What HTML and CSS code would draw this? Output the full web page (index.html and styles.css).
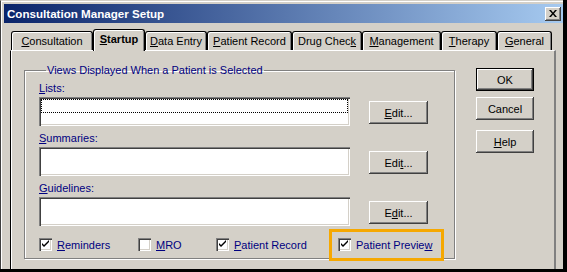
FILE: index.html
```html
<!DOCTYPE html>
<html lang="en">

<head>
    <meta charset="UTF-8">
    <title>Consultation Manager Setup</title>
    <link rel="stylesheet" href="styles.css">
</head>

<body>

    <div class="window">

        <!-- Title bar -->
        <div class="titlebar">
            <span class="title">Consultation Manager Setup</span>
            <span class="close-btn">
                <svg width="8" height="7" viewBox="0 0 8 7">
                    <path d="M0 0h2l2 2.5L6 0h2L5 3.5 8 7H6L4 4.5 2 7H0l3-3.5z" fill="#000" />
                </svg>
            </span>
        </div>

        <!-- Tabs -->
        <div class="tabs">
            <div class="tab tab-consult"><u>C</u>onsultation</div>
            <div class="tab tab-active"><u>S</u>tartup</div>
            <div class="tab tab-data"><u>D</u>ata Entry</div>
            <div class="tab tab-record"><u>P</u>atient Record</div>
            <div class="tab tab-drug">Drug Chec<u>k</u></div>
            <div class="tab tab-manage"><u>M</u>anagement</div>
            <div class="tab tab-therapy"><u>T</u>herapy</div>
            <div class="tab tab-general"><u>G</u>eneral</div>
        </div>

        <!-- Tab panel -->
        <div class="panel">

            <fieldset class="group">
                <legend>Views Displayed When a Patient is Selected</legend>

                <div class="field-label"><u>L</u>ists:</div>
                <div class="field-row">
                    <div class="listbox">
                        <div class="focus-row"></div>
                    </div>
                    <button class="btn btn-edit"><u>E</u>dit...</button>
                </div>

                <div class="field-label"><u>S</u>ummaries:</div>
                <div class="field-row">
                    <div class="listbox"></div>
                    <button class="btn btn-edit">Edi<u>t</u>...</button>
                </div>

                <div class="field-label"><u>G</u>uidelines:</div>
                <div class="field-row">
                    <div class="listbox"></div>
                    <button class="btn btn-edit">E<u>d</u>it...</button>
                </div>

                <div class="checks">
                    <label class="check"><span class="box checked"></span><span><u>R</u>eminders</span></label>
                    <label class="check"><span class="box"></span><span><u>M</u>RO</span></label>
                    <label class="check"><span class="box checked"></span><span><u>P</u>atient Record</span></label>
                    <label class="check check-marked"><span class="box checked"></span><span>Patient Previe<u>w</u></span></label>
                </div>
            </fieldset>

            <div class="side-buttons">
                <button class="btn btn-default">OK</button>
                <button class="btn">Cancel</button>
                <button class="btn btn-help"><u>H</u>elp</button>
            </div>

        </div>
    </div>

</body>

</html>
```

FILE: styles.css
```css
* {
    margin: 0;
    padding: 0;
    box-sizing: border-box;
}

body {
    width: 567px;
    height: 272px;
    overflow: hidden;
    background: #000;
    font-family: "Liberation Sans", Arial, sans-serif;
    font-size: 11px;
}

u {
    text-decoration: underline;
    text-underline-offset: 1px;
}

/* Window frame */
.window {
    width: 563px;
    height: 269px;
    background: #d4d0c8;
    border-top: 1px solid #d4d0c8;
    border-left: 1px solid #404040;
    box-shadow: inset 1px 1px 0 #fff;
    padding: 3px 0 0 3px;
    display: flex;
    flex-direction: column;
}

/* Title bar */
.titlebar {
    height: 19px;
    background: linear-gradient(to right, #0a246a, #a6caf0);
    display: flex;
    align-items: center;
    justify-content: space-between;
    padding: 0 2px 0 3px;
}

.title {
    color: #fff;
    font-weight: bold;
    font-size: 11.6px;
}

.close-btn {
    width: 16px;
    height: 14px;
    background: #d4d0c8;
    box-shadow: inset -1px -1px 0 #404040, inset 1px 1px 0 #fff, inset -2px -2px 0 #808080;
    display: flex;
    align-items: center;
    justify-content: center;
    padding-bottom: 1px;
}

/* Tabs */
.tabs {
    display: flex;
    align-items: flex-end;
    height: 27px;
    padding-left: 7px;
    position: relative;
    z-index: 2;
}

.tab {
    height: 19px;
    border: 1px solid #000;
    border-bottom: none;
    border-radius: 3px 3px 0 0;
    box-shadow: inset 1px 1px 0 #fff, inset -1px 0 0 #808080;
    display: flex;
    align-items: center;
    justify-content: center;
    color: #000;
    padding-bottom: 1px;
}

.tab-consult { width: 82px; }
.tab-data { width: 62px; }
.tab-record { width: 85px; }
.tab-drug { width: 70px; }
.tab-manage { width: 79px; }
.tab-therapy { width: 56px; }
.tab-general { width: 55px; }

.tab-active {
    width: 52px;
    height: 22px;
    margin-bottom: -1px;
    font-weight: bold;
    background: #d4d0c8;
    padding-bottom: 3px;
}

/* Panel */
.panel {
    flex: 1;
    margin-left: 6px;
    width: 546px;
    border-top: 1px solid #fff;
    border-left: 1px solid #000;
    border-right: 2px solid #808080;
    box-shadow: inset 1px 0 0 #fff;
    padding: 13px 0 0 13px;
    display: flex;
    align-items: flex-start;
    gap: 21px;
}

/* Group box */
.group {
    width: 431px;
    height: 195px;
    border: 1px solid #808080;
    box-shadow: inset 1px 1px 0 #fff, 1px 1px 0 #fff;
    padding: 6px 0 0 14px;
}

.group legend {
    color: #000080;
    padding: 0 1px;
    margin-left: 7px;
    line-height: 12px;
}

.field-label {
    color: #000080;
    height: 14px;
    line-height: 13px;
    margin-bottom: 1px;
}

.field-row {
    display: flex;
    align-items: center;
    gap: 19px;
    margin-bottom: 6px;
}

.listbox {
    width: 311px;
    height: 29px;
    background: #fff;
    box-shadow: inset 1px 1px 0 #808080, inset 2px 2px 0 #404040, inset -1px -1px 0 #fff, inset -2px -2px 0 #d4d0c8;
    padding: 2px;
}

.focus-row {
    height: 14px;
    border: 1px dotted #000;
}

/* Buttons */
.btn {
    font-family: inherit;
    font-size: 11px;
    color: #000;
    background: #d4d0c8;
    border: none;
    width: 58px;
    height: 23px;
    box-shadow: inset -1px -1px 0 #404040, inset 1px 1px 0 #fff, inset -2px -2px 0 #808080;
}

.btn-edit {
    width: 59px;
    margin-top: 2px;
}

.btn-default {
    border: 1px solid #000;
}

.side-buttons {
    display: flex;
    flex-direction: column;
    gap: 6px;
    margin-top: 4px;
}

.btn-help {
    margin-top: 4px;
}

/* Checkboxes */
.checks {
    display: grid;
    grid-template-columns: 99px 78px 116px auto;
    align-items: center;
    margin-top: 12px;
}

.check {
    display: flex;
    align-items: center;
    gap: 5px;
    color: #000080;
}

.box {
    width: 13px;
    height: 13px;
    background: #fff;
    box-shadow: inset 1px 1px 0 #808080, inset 2px 2px 0 #404040, inset -1px -1px 0 #fff, inset -2px -2px 0 #d4d0c8;
}

.box.checked {
    background: #fff url("data:image/svg+xml,%3Csvg xmlns='http://www.w3.org/2000/svg' width='13' height='13'%3E%3Cpath d='M3 5v2l2 2 5-5V2L5 7z' fill='%23000'/%3E%3C/svg%3E") no-repeat;
}

.check-marked {
    justify-self: start;
    padding: 6px 9px 7px 6px;
    margin: -6px 0 -7px 0;
    outline: 3px solid #f6a800;
}
```
